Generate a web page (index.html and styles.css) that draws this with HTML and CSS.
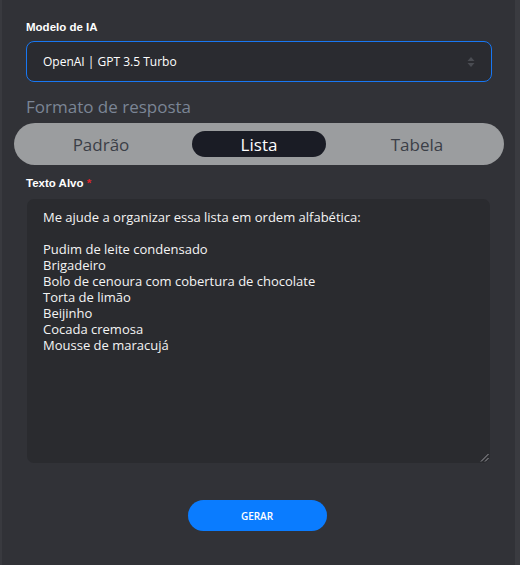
FILE: index.html
```html
<!DOCTYPE html>
<html lang="pt">
<head>
<meta charset="utf-8">
<link rel="stylesheet" href="styles.css">
</head>
<body>
<div class="page">
  <main class="panel">
    <label class="label">Modelo de IA</label>
    <div class="select">
      <span class="select-text">OpenAI | GPT 3.5 Turbo</span>
      <svg class="select-arrow" width="8" height="12" viewBox="0 0 8 12"><path d="M4 1 L7.5 5 H0.5 Z M4 11 L0.5 7 H7.5 Z" fill="#4a4c52"/></svg>
    </div>
    <div class="section-title">Formato de resposta</div>
    <div class="segmented">
      <div class="seg">Padrão</div>
      <div class="seg active"><span>Lista</span></div>
      <div class="seg">Tabela</div>
    </div>
    <label class="label label-target">Texto Alvo <span class="req">*</span></label>
    <div class="textarea">
      <div class="ta-text">Me ajude a organizar essa lista em ordem alfabética:

Pudim de leite condensado
Brigadeiro
Bolo de cenoura com cobertura de chocolate
Torta de limão
Beijinho
Cocada cremosa
Mousse de maracujá</div>
      <svg class="grip" width="9" height="9" viewBox="0 0 9 9"><path d="M8.5 1 L1 8.5 M8.5 5 L5 8.5" stroke="#9a9ba0" stroke-width="1"/></svg>
    </div>
    <div class="actions">
      <button class="btn">GERAR</button>
    </div>
  </main>
  <div class="scroll-strip"></div>
</div>
</body>
</html>
```

FILE: styles.css
```css
* { box-sizing: border-box; }
html, body { margin: 0; padding: 0; }
body {
  width: 520px;
  height: 565px;
  background: #323338;
  font-family: "Open Sans", sans-serif;
  color: #fff;
  overflow: hidden;
}
.page {
  display: flex;
  height: 565px;
  border-left: 2px solid #393a3f;
}
.panel {
  flex: 1;
  display: flex;
  flex-direction: column;
  padding: 19px 23px 0 24px;
  background: #313237;
}
.scroll-strip {
  width: 5px;
  background: #3a3b40;
}
.label {
  font-family: "Liberation Sans", Arial, sans-serif;
  font-weight: 700;
  font-size: 11.5px;
  line-height: 16px;
  color: #fff;
}
.select {
  margin-top: 6px;
  height: 41px;
  border: 1px solid #1877f2;
  border-radius: 8px;
  background: #2a2b30;
  display: flex;
  align-items: center;
  padding: 0 16px 0 16px;
}
.select-text {
  flex: 1;
  font-size: 12px;
  font-weight: 500;
}
.select-arrow { display: block; }
.section-title {
  margin-top: 14px;
  font-size: 17px;
  line-height: 22px;
  color: #7b8595;
}
.segmented {
  margin: 5px -12px 0 -12px;
  height: 42px;
  border-radius: 21px;
  background: #9b9d9f;
  display: grid;
  grid-template-columns: repeat(3, 1fr);
  padding: 8px;
}
.seg {
  display: flex;
  align-items: center;
  justify-content: center;
  font-size: 17px;
  color: #3b3f47;
}
.seg.active { padding: 0 12px; }
.seg.active span {
  flex: 1;
  height: 26px;
  border-radius: 13px;
  background: #1a1c25;
  color: #fff;
  font-weight: 500;
  display: flex;
  align-items: center;
  justify-content: center;
}
.label-target { margin-top: 10px; }
.req { color: #e0242a; }
.textarea {
  position: relative;
  margin: 8px 2px 0 1px;
  height: 264px;
  background: #2a2b2f;
  border-radius: 7px;
  padding: 10px 16px;
}
.ta-text {
  white-space: pre-wrap;
  font-size: 13px;
  line-height: 16px;
  color: #f4f4f4;
}
.grip {
  position: absolute;
  right: 1px;
  bottom: 1px;
}
.actions {
  display: flex;
  justify-content: center;
  margin-top: 37px;
}
.btn {
  width: 139px;
  height: 31px;
  border: none;
  border-radius: 16px;
  background: #0a7cff;
  color: #fff;
  font-family: "Open Sans", sans-serif;
  font-weight: 600;
  font-size: 10px;
  margin-right: 4px;
}
```
